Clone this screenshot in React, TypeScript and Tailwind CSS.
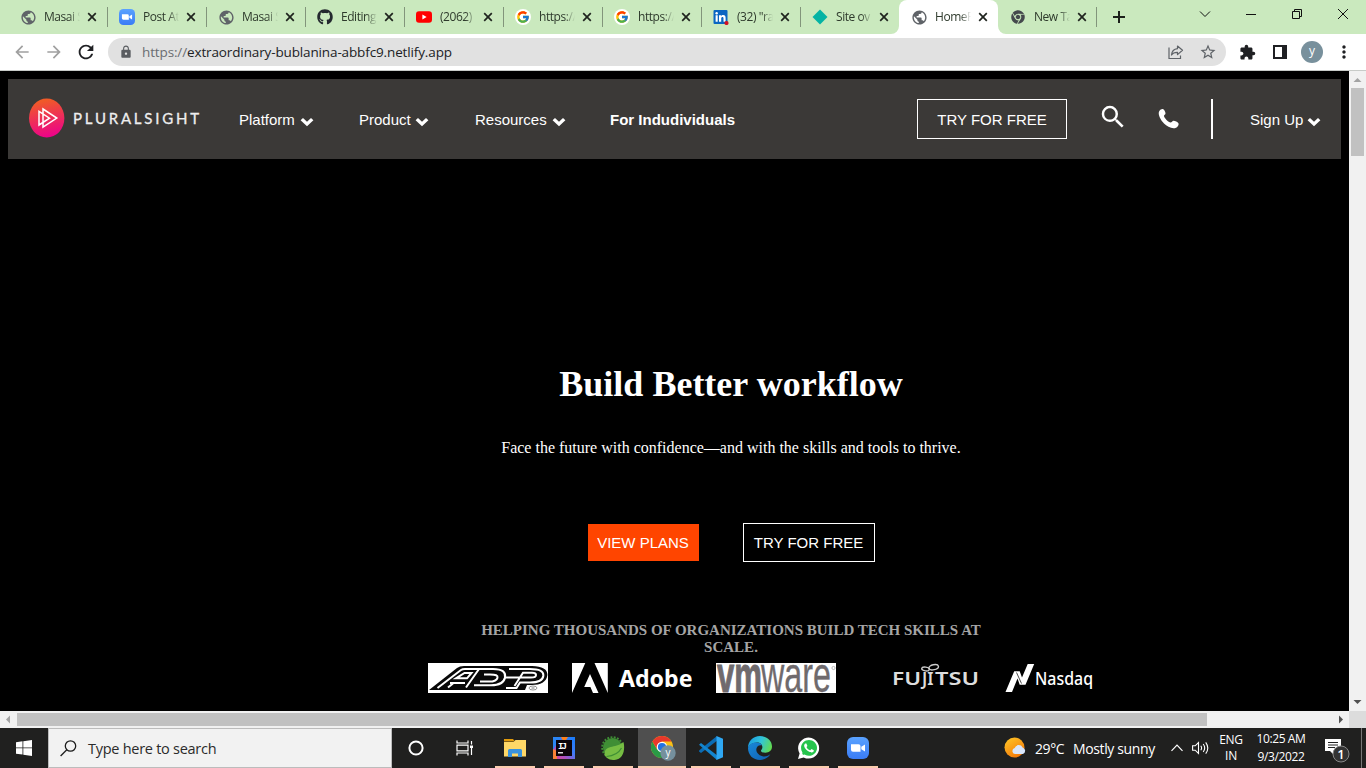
import React from "react";
import {
  MdPublic, MdLock, MdStarBorder, MdExtension, MdRefresh, MdArrowBack,
  MdArrowForward, MdMoreVert, MdSearch,
} from "react-icons/md";
import { FaGithub, FaWhatsapp, FaChrome } from "react-icons/fa";
import { FcGoogle } from "react-icons/fc";

const Zoom = ({ size }: { size: number }) => (
  <svg width={size} height={size} viewBox="0 0 22 22">
    <defs>
      <linearGradient id="zoomBlue" x1="0" y1="0" x2="0" y2="1">
        <stop offset="0" stopColor="#5aa2ff" />
        <stop offset="1" stopColor="#3a7cf5" />
      </linearGradient>
    </defs>
    <rect width="22" height="22" rx="6" fill="url(#zoomBlue)" />
    <path d="M4 7.2h7.5a2 2 0 0 1 2 2v5.6H6a2 2 0 0 1-2-2zM14.3 9.8l3.7-2.4v7.2l-3.7-2.4z" fill="#fff" />
  </svg>
);

const Globe = () => <MdPublic size={17} className="shrink-0 text-[#5f6368]" />;

const GoogleIcon = () => (
  <div className="flex size-4 items-center justify-center rounded-full bg-white">
    <FcGoogle size={14} />
  </div>
);

const Youtube = () => (
  <svg width="16" height="16" viewBox="0 0 16 16">
    <rect y="2.3" width="16" height="11.4" rx="3" fill="#f00" />
    <path d="M6.4 5.6v4.8L10.6 8z" fill="#fff" />
  </svg>
);

const LinkedIn = () => (
  <svg width="16" height="16" viewBox="0 0 16 16">
    <rect x="0.5" y="1" width="14" height="14" rx="1" fill="#0a66c2" />
    <path d="M2.6 6.3h2.1v6.5H2.6zM6 6.3h2v.9c.5-.8 1.2-1.1 2.1-1.1 1.9 0 2.5 1.2 2.5 3v3.7h-2.1V9.4c0-.9-.2-1.5-1-1.5s-1.3.6-1.3 1.5v3.4H6z" fill="#fff" />
    <circle cx="3.65" cy="4.2" r="1.2" fill="#fff" />
    <circle cx="13.5" cy="14" r="2.1" fill="#d11124" />
  </svg>
);

const Diamond = () => (
  <svg width="16" height="16" viewBox="0 0 16 16">
    <path d="M8 .5 15.5 8 8 15.5.5 8z" fill="#05b3a4" />
  </svg>
);

type TabInfo = { title: string; icon: React.ReactNode; active?: boolean; sep?: boolean; last?: boolean };

const tabs: TabInfo[] = [
  { title: "Masai S", icon: <Globe />, sep: true },
  { title: "Post At", icon: <Zoom size={16} />, sep: true },
  { title: "Masai S", icon: <Globe />, sep: true },
  { title: "Editing", icon: <FaGithub size={16} className="text-[#24292f]" />, sep: true },
  { title: "(2062) ", icon: <Youtube />, sep: true },
  { title: "https://", icon: <GoogleIcon />, sep: true },
  { title: "https://", icon: <GoogleIcon />, sep: true },
  { title: "(32) \"ra", icon: <LinkedIn />, sep: true },
  { title: "Site ov", icon: <Diamond /> },
  { title: "HomeP", icon: <Globe />, active: true },
  { title: "New Ta", icon: <FaChrome size={14} className="text-[#45494d]" />, sep: true, last: true },
];

const Tab = ({ title, icon, active, sep, last }: TabInfo) => (
  <div className={`relative flex h-[34px] w-[99px] shrink-0 items-center pl-3 ${active ? "z-10 rounded-t-lg bg-white" : ""}`}>
    {active && (
      <>
        <svg className="absolute -left-2 bottom-0" width="8" height="8"><path d="M8 0v8H0a8 8 0 0 0 8-8z" fill="#fff" /></svg>
        <svg className="absolute -right-2 bottom-0" width="8" height="8"><path d="M0 0v8h8a8 8 0 0 1-8-8z" fill="#fff" /></svg>
      </>
    )}
    <div className="flex w-4 shrink-0 items-center justify-center">{icon}</div>
    <div className="ml-2 w-[36px] overflow-hidden whitespace-pre text-[12px] tracking-[-0.45px] text-[#2e3a2c] [mask-image:linear-gradient(to_right,black_70%,transparent)]">
      {title}
    </div>
    <svg className="ml-[7px] shrink-0" width="10" height="10" viewBox="0 0 10 10"><path d="M1.2 1.2l7.6 7.6M8.8 1.2 1.2 8.8" stroke="#1f241e" strokeWidth="1.7" /></svg>
    {sep && <div className={`ml-auto h-5 w-px bg-[#82957b] ${last ? "" : "-mr-px"}`} />}
  </div>
);

const TabStrip = () => (
  <div className="flex h-[34px] bg-[#cae9be] pl-2">
    {tabs.map((t, i) => <Tab key={i} {...t} />)}
    <div className="flex w-[44px] items-center justify-center">
      <svg width="12" height="12"><path d="M6 0v12M0 6h12" stroke="#1c211b" strokeWidth="2" /></svg>
    </div>
    <svg className="ml-[41px]" width="184" height="28" viewBox="0 0 184 28" fill="none" stroke="#111">
      <path d="M18 11.5l5 5 5-5" />
      <path d="M64 14.5h10" />
      <path d="M110.5 11.5h7v7h-7zM112.5 11.5v-2h7v7h-2" />
      <path d="M156 9l10 10M166 9l-10 10" />
    </svg>
  </div>
);

const Toolbar = () => (
  <div className="flex h-9 items-center bg-white">
    <MdArrowBack size={20} className="ml-3 text-[#a0a0a0]" />
    <MdArrowForward size={20} className="ml-3 text-[#a0a0a0]" />
    <MdRefresh size={22} className="ml-[11px] text-[#1f2023]" />
    <div className="ml-[11px] flex h-7 w-[1118px] items-center rounded-full bg-[#e1e1e1] pl-[11px] pr-[9px]">
      <MdLock size={14} className="text-[#5a5d61]" />
      <div className="ml-[9px] whitespace-nowrap text-[13.5px] tracking-[-0.13px] text-[#202124]">
        <span className="text-[#6a6d71]">https://</span>extraordinary-bublanina-abbfc9.netlify.app
      </div>
      <svg className="ml-auto" width="16" height="16" viewBox="0 0 16 16" fill="none" stroke="#5f6368" strokeWidth="1.2">
        <path d="M1 3.5V14.5H12.5V11.5" />
        <path d="M9.5 2l5 4.3-5 4.3V8.3C6.5 8.2 4.6 9.2 3.5 11c.3-3.3 2.5-5.9 6-6.3z" strokeLinejoin="round" />
      </svg>
      <MdStarBorder size={18} className="ml-[15px] text-[#5f6368]" />
    </div>
    <MdExtension size={17} className="ml-[13px] text-[#1f2023]" />
    <svg className="ml-[17px]" width="14" height="14" viewBox="0 0 14 14">
      <path d="M0 0h14v14H0zM2 2v10h7V2z" fill="#1f2023" fillRule="evenodd" />
    </svg>
    <div className="ml-[14px] flex size-[22px] items-center justify-center rounded-full bg-[#78909c] pb-0.5 text-[12px] text-white">y</div>
    <MdMoreVert size={20} className="ml-[11px] text-[#1f2023]" />
  </div>
);

const Chevron = ({ className }: { className?: string }) => (
  <svg className={className} width="14" height="10" viewBox="0 0 14 10">
    <path d="M.6 3.2 3 .9l4 3.800L11 .9l2.400 2.300L7 9.300z" fill="#fff" />
  </svg>
);

const PluralsightLogo = () => (
  <svg className="-mt-0.5" width="172" height="42" viewBox="0 0 172 42">
    <defs>
      <linearGradient id="psGrad" x1="0.4" y1="0" x2="0.6" y2="1">
        <stop offset="0.05" stopColor="#f05a28" />
        <stop offset="1" stopColor="#ec008c" />
      </linearGradient>
    </defs>
    <ellipse cx="17.7" cy="21.1" rx="17.7" ry="19.5" fill="url(#psGrad)" />
    <path d="M14 12l13.8 9L14 30.2zM10 14.3l10.5 6.9L10 28z" fill="none" stroke="#fff" strokeWidth="1.5" />
    <text x="44" y="26.6" textLength="126" fontFamily="Lato, sans-serif" fontSize="15" fontWeight="400" fill="#eee" stroke="#eee" strokeWidth=".3">PLURALSIGHT</text>
  </svg>
);

const Nav = () => (
  <nav className="mx-2 mt-2 flex h-20 w-[1333px] items-center bg-[#3b3937] pl-[21px] font-['Liberation_Sans',Arial,sans-serif] text-[15px] text-white">
    <PluralsightLogo />
    <div className="ml-[38px] flex w-[120px] items-center pt-0.5">Platform<Chevron className="ml-[5px] mt-1" /></div>
    <div className="flex w-[116px] items-center pt-0.5">Product<Chevron className="ml-[4px] mt-1" /></div>
    <div className="flex w-[135px] items-center pt-0.5">Resources<Chevron className="ml-[5px] mt-1" /></div>
    <div className="w-[307px] pt-0.5 font-bold">For Indudividuals</div>
    <button className="h-10 w-[150px] border border-white pt-0.5">TRY FOR FREE</button>
    <MdSearch size={30} className="-mt-1 ml-[31px]" />
    <svg className="ml-[30px]" width="22" height="22" viewBox="0 0 22 22">
      <path d="M1.2 3.2C2.3 1.600 4 .6 5.300 1.200c1.300.8 2.100 2.800 2.200 4.300.1 1-1.500 1.600-1.500 2.500 0 1.800 4.600 6.400 6.600 6.600 1 .1 1.800-1.900 3-1.800 1.500.2 4 1.200 4.800 2.500.8 1.500-.8 3.600-2.400 4.400-3.500 1.600-8.800-.9-12-4.200C2.700 12.200-.5 6.500 1.200 3.200z" fill="#fff" />
    </svg>
    <div className="ml-[31px] h-10 w-0.5 bg-white" />
    <div className="ml-[37px] flex items-center pt-0.5">Sign Up<Chevron className="ml-[4px] mt-1" /></div>
  </nav>
);

const Adp = () => (
  <svg width="120" height="30" viewBox="0 0 120 30">
    <rect width="120" height="30" fill="#fff" />
    <path d="M1 27 29 5Q31.500 3 36 3h68c11 0 16 4 15.300 9.500-.8 6.500-7 9.500-15.300 9.500h-5l-2 5z" fill="#080808" />
    <g fill="none" stroke="#fff" strokeWidth="2">
      <path d="M9.500 25 33 7q1.500-1 4-1h14L38 24.500" />
      <path d="M22 20h15M28 15.300h11l4.500-5.300h-7z" />
      <path d="M20 24.500l5-4" />
      <path d="M51 6h14c10 0 13 3.500 12 8.500S71 22.300 63 22.300H46" />
      <path d="M56 11.500h6c6 0 8 1 7.500 3.200S67 18.600 61 18.600h-9" />
      <path d="M81 6h21c9 0 14 2 13.300 7-.7 5-5 6.500-13.300 6.500H92L88.500 25H78" />
      <path d="M76 14.500h27c3.500 0 5-1 5-2.500s-1-2.300-4-2.300h-9L86.500 23" />
    </g>
    <ellipse cx="105" cy="25" rx="4" ry="2" fill="#fff" stroke="#777" strokeWidth=".8" />
    <path d="M103.500 25h3" stroke="#777" />
  </svg>
);

const Adobe = () => (
  <svg width="120" height="30" viewBox="0 0 120 30">
    <path d="M0 0h13.300L0 30zM22.500 0h13.300v30zM18 11l8.500 19H21l-2.600-6h-6.200z" fill="#fff" />
    <text x="47" y="23.500" textLength="73.500" lengthAdjust="spacingAndGlyphs" fontFamily="'Noto Sans', sans-serif" fontSize="23.500" fontWeight="700" fill="#fff">Adobe</text>
  </svg>
);

const Vmware = () => (
  <svg width="120" height="30" viewBox="0 0 120 30">
    <rect width="120" height="30" fill="#fff" />
    <g transform="translate(0 28.500) scale(1 1.650)" fill="#6f6a6d" stroke="#6f6a6d" fontFamily="'Liberation Sans', sans-serif">
      <text x="1" y="0" textLength="45" lengthAdjust="spacingAndGlyphs" fontSize="30" fontWeight="700" strokeWidth=".6">vm</text>
      <text x="45" y="0" textLength="70" lengthAdjust="spacingAndGlyphs" fontSize="30" fontWeight="400" strokeWidth=".2">ware</text>
    </g>
    <circle cx="117.500" cy="5" r="1.600" fill="none" stroke="#999" strokeWidth=".7" />
  </svg>
);

const Fujitsu = () => (
  <svg width="120" height="30" viewBox="0 0 120 30">
    <g fill="#ddd" fontFamily="'Noto Sans', sans-serif" fontWeight="600">
      <text x="32" y="22" textLength="29" lengthAdjust="spacingAndGlyphs" fontSize="17">FU</text>
      <text x="75" y="22" textLength="44" lengthAdjust="spacingAndGlyphs" fontSize="17">TSU</text>
      <text x="62" y="22" textLength="11.500" lengthAdjust="spacingAndGlyphs" fontSize="17">JI</text>
    </g>
    <ellipse cx="65.500" cy="6" rx="3.800" ry="1.900" transform="rotate(8 65.500 6)" fill="none" stroke="#ccc" strokeWidth="1.400" />
    <ellipse cx="73.700" cy="4.200" rx="4.800" ry="2.500" transform="rotate(-12 73.700 4.200)" fill="none" stroke="#ccc" strokeWidth="1.400" />
  </svg>
);

const Nasdaq = () => (
  <svg width="93" height="30" viewBox="0 0 93 30">
    <path d="M1.500 29 10.200 8.300h5.500L18 14.500 23.700 1h6.500l-8.700 20.700h-5.800L13.500 15.500 8 29z" fill="#fff" />
    <path d="M12.500 9.500l5 11" stroke="#000" strokeWidth=".7" />
    <text x="31" y="22" textLength="58" lengthAdjust="spacingAndGlyphs" fontFamily="'Noto Sans', sans-serif" fontSize="18.500" fontWeight="500" fill="#fff">Nasdaq</text>
  </svg>
);

const Page = () => (
  <div className="h-[640px] w-[1349px] overflow-hidden bg-black">
    <div className="flow-root">
      <Nav />
      <main className="ml-2 flex w-[1446px] flex-col items-center font-['Liberation_Serif','Times_New_Roman',serif] text-white">
        <h1 className="mt-[203px] h-11 whitespace-nowrap text-[36px] font-bold leading-[44px]">Build Better workflow</h1>
        <p className="mt-[32px] h-5 whitespace-nowrap text-base leading-5">Face the future with confidence—and with the skills and tools to thrive.</p>
        <div className="mt-[65px] flex items-center gap-11 font-['Liberation_Sans',Arial,sans-serif] text-[15px]">
          <button className="h-[37px] w-[111px] whitespace-nowrap bg-[#ff4500] pt-0.5">VIEW PLANS</button>
          <button className="h-[39px] w-[132px] whitespace-nowrap border border-white pt-0.5">TRY FOR FREE</button>
        </div>
        <p className="mt-[60px] w-[530px] text-center text-[15px] font-bold leading-[17px] text-[#a5a5a5]">
          HELPING THOUSANDS OF ORGANIZATIONS BUILD TECH SKILLS AT SCALE.
        </p>
        <div className="ml-[420px] mt-[7px] flex gap-6 self-start">
          <Adp /><Adobe /><Vmware /><Fujitsu /><Nasdaq />
        </div>
      </main>
    </div>
  </div>
);

const VScroll = () => (
  <div className="flex h-[640px] w-[17px] flex-col items-center bg-[#f1f1f1]">
    <svg width="17" height="17"><path d="M4.500 11 8.500 7l4 4z" fill="#a3a3a3" /></svg>
    <div className="h-[68px] w-[13px] bg-[#c1c1c1]" />
    <svg className="mt-auto" width="17" height="17"><path d="M4.500 6 8.500 10l4-4z" fill="#505050" /></svg>
  </div>
);

const HScroll = () => (
  <div className="flex h-[17px] items-center bg-[#f1f1f1]">
    <svg width="17" height="17"><path d="M10 4.500 6 8.500l4 4z" fill="#a3a3a3" /></svg>
    <div className="h-[13px] w-[1190px] bg-[#c1c1c1]" />
    <svg className="ml-auto" width="17" height="17"><path d="M7 4.500 11 8.500l-4 4z" fill="#505050" /></svg>
    <div className="h-[17px] w-[17px] bg-[#dcdcdc]" />
  </div>
);

const Folder = () => (
  <svg width="22" height="20" viewBox="0 0 22 20">
    <path d="M0 1h9l2 2.500H0z" fill="#e29b0c" />
    <path d="M0 4h9.500l2-2H22v16.500H0z" fill="#ffd867" />
    <path d="M4 19v-6.500A1.500 1.500 0 0 1 5.500 11h11a1.500 1.500 0 0 1 1.500 1.500V19h-4v-3.500H8V19z" fill="#3a93dd" />
  </svg>
);

const Intellij = () => (
  <svg width="22" height="22" viewBox="0 0 22 22">
    <defs>
      <linearGradient id="ij" x1="0" y1="1" x2="1" y2="0">
        <stop offset="0" stopColor="#e8468a" /><stop offset=".3" stopColor="#b04fc0" />
        <stop offset=".6" stopColor="#3f7cf6" /><stop offset="1" stopColor="#167dfc" />
      </linearGradient>
    </defs>
    <rect width="22" height="22" fill="url(#ij)" />
    <path d="M0 0h8L0 13z" fill="#2b86f5" />
    <path d="M8 0h7L11 6z" fill="#fc801d" />
    <path d="M0 12l4 2v8H0z" fill="#f98236" />
    <rect x="3" y="3" width="16" height="16" fill="#0b0309" />
    <text x="5" y="11.500" fontFamily="'Liberation Mono', monospace" fontSize="9" fontWeight="700" fill="#fff" textLength="9">IJ</text>
    <rect x="5" y="15" width="5" height="1.500" fill="#ddd" />
  </svg>
);

const Spring = () => (
  <svg width="24" height="24" viewBox="0 0 24 24">
    <circle cx="11.500" cy="11.500" r="9.500" fill="#3f8e35" />
    <circle cx="11.500" cy="11.500" r="10.300" fill="none" stroke="#3f8e35" strokeWidth="2" strokeDasharray="1.900 1.400" />
    <path d="M22.500 6c2 8-.5 17.500-9 18-5 .3-10-2.500-10-6.500C4 8.500 17 12 22.500 6z" fill="#76bd43" />
    <path d="M5.500 20.500C12 20 17.500 17.500 20.500 12" fill="none" stroke="#3f8e35" strokeWidth="1.200" />
  </svg>
);

const ChromeIcon = () => (
  <svg width="25" height="25" viewBox="0 0 25 25">
    <circle cx="11" cy="11" r="11" fill="#fbc116" />
    <path d="M1.470 5.500A11 11 0 0 0 11 22l4.800-8.200L11 11 6.200 13.800z" fill="#2a9a46" />
    <path d="M1.470 5.500 6.300 13.600 11 5.500l9.530 0A11 11 0 0 0 1.470 5.500z" fill="#e8382c" />
    <circle cx="11" cy="11" r="5.300" fill="#fff" /><circle cx="11" cy="11" r="4.100" fill="#2272e3" />
    <circle cx="17" cy="17" r="7.700" fill="#75909d" />
    <text x="17" y="20" textAnchor="middle" fontFamily="'Open Sans', sans-serif" fontSize="10" fill="#fff">y</text>
  </svg>
);

const VsCode = () => (
  <svg width="24" height="24" viewBox="0 0 24 24">
    <path d="M0 15.400 2 17 18 4.800V0L.3 14.300z" fill="#0b6cb4" />
    <path d="M2 7l16 12.200V24L0 8.800z" fill="#1385cf" />
    <path d="M17.500 0 24 2.800v18.400L17.500 24z" fill="#2fa8f3" />
  </svg>
);

const Edge = () => (
  <svg width="24" height="24" viewBox="0 0 24 24">
    <defs>
      <linearGradient id="edgeTop" x1="0" y1=".3" x2="1" y2=".6"><stop offset="0" stopColor="#1b9de2" /><stop offset=".5" stopColor="#31c4da" /><stop offset="1" stopColor="#62db50" /></linearGradient>
      <linearGradient id="edgeLow" x1="0" y1="0" x2="1" y2="1"><stop offset="0" stopColor="#1988d9" /><stop offset="1" stopColor="#0f5fb0" /></linearGradient>
    </defs>
    <path d="M0 12C0 5 5 0 12 0s12 4.500 12 10.500c0 4-3 6.200-6.500 6.200-2.500 0-4.500-.8-4.500-2 0-.8 1.400-1.400 1.400-3.400C14.400 8.500 12 6.500 9 6.500 4 6.500 1 9.500 0 12z" fill="url(#edgeTop)" />
    <path d="M0 12C1 8.500 4.500 6.500 8.500 6.500c3 0 4.700 1.300 5.400 2.800C10.500 8.500 8.300 11 8.300 13.500c0 4 4 7 8.200 7 2.500 0 4.500-1.200 5.800-2.200C20.500 21.500 16.500 24 12 24 5 24 0 19 0 12z" fill="url(#edgeLow)" />
  </svg>
);

const WhatsApp = () => (
  <div className="grid size-6 place-items-center">
    <svg className="col-start-1 row-start-1" width="24" height="24" viewBox="0 0 24 24">
      <path d="M1 23 2.600 17.500A10.500 10.500 0 1 1 6.700 21.400z" fill="#fff" />
      <circle cx="12" cy="12" r="9" fill="#26c44c" />
    </svg>
    <FaWhatsapp size={22} className="col-start-1 row-start-1 text-white" />
  </div>
);

const apps: { node: React.ReactNode; active?: boolean }[] = [
  { node: <Folder /> }, { node: <Intellij /> }, { node: <Spring /> }, { node: <ChromeIcon />, active: true },
  { node: <VsCode /> }, { node: <Edge /> }, { node: <WhatsApp /> }, { node: <Zoom size={22} /> },
];

const Taskbar = () => (
  <div className="flex h-10 items-center bg-[#20201f] text-white">
    <div className="flex w-12 justify-center">
      <svg width="16" height="16" viewBox="0 0 16 16" fill="#fff"><path d="M0 2.200 6.500 1.300v6.200H0zM7.300 1.200 16 0v7.500H7.300zM0 8.300h6.500v6.300L0 13.700zM7.300 8.300H16V16l-8.700-1.200z" /></svg>
    </div>
    <div className="flex h-10 w-[344px] items-center border border-[#bcbcbc] bg-[#f2f2f2] pl-[11px] text-[#2b2b2b]">
      <svg width="17" height="17" viewBox="0 0 17 17" fill="none" stroke="#1c1c1c" strokeWidth="1.300"><circle cx="10.500" cy="6" r="5.200" /><path d="M6.800 9.800.6 16" /></svg>
      <div className="ml-[11px] whitespace-nowrap pt-px text-[14.5px] tracking-[-0.27px]">Type here to search</div>
    </div>
    <div className="flex w-12 justify-center">
      <svg width="16" height="16"><circle cx="8" cy="8" r="6.600" fill="none" stroke="#fff" strokeWidth="2" /></svg>
    </div>
    <div className="flex w-12 justify-center">
      <svg width="17" height="16" viewBox="0 0 17 16" fill="none" stroke="#fff" strokeWidth="1.200"><path d="M1 .5V3h11V.5M1 15.500V13h11v2.500M1 5.200h11v5.600H1zM15.500 1v3.500M15.500 8v7" /><path d="M14 5.500h3V8h-3z" fill="#fff" stroke="none" /></svg>
    </div>
    <div className="ml-[3px] flex gap-px">
      {apps.map((a, i) => (
        <div key={i} className={`flex h-10 w-12 flex-col items-center ${a.active ? "bg-[#4f4f4f]" : ""}`}>
          <div className={`flex h-[38px] items-center pt-0.5 ${a.active ? "pl-0.5" : ""}`}>{a.node}</div>
          <div className={`h-0.5 bg-[#fbcdaf] ${a.active ? "w-12" : "w-10"}`} />
        </div>
      ))}
    </div>
    <svg className="ml-[122px]" width="23" height="22" viewBox="0 0 23 22">
      <defs><linearGradient id="sun" x1="0" y1="0" x2="0.600" y2="1"><stop offset="0" stopColor="#ffc928" /><stop offset="1" stopColor="#f47b0a" /></linearGradient></defs>
      <circle cx="10.500" cy="10.500" r="10" fill="url(#sun)" />
      <path d="M11 17a3 3 0 0 1-.3-5.900 4.300 4.300 0 0 1 7.900-.7A3.500 3.500 0 0 1 19 17z" fill="#d9e6fb" />
    </svg>
    <div className="ml-[8px] w-[38px] whitespace-nowrap text-[14px] tracking-[-0.4px]">29°C</div>
    <div className="w-[98px] whitespace-nowrap text-[14px] tracking-[-0.37px]">Mostly sunny</div>
    <svg width="12" height="8" fill="none" stroke="#fff" strokeWidth="1.200"><path d="M.5 6.800 6 1.200l5.500 5.600" /></svg>
    <svg className="ml-[9px]" width="18" height="14" viewBox="0 0 18 14" fill="none" stroke="#fff" strokeWidth="1.100"><path d="M.6 4.800h2.600L6.500 1.500v11L3.200 9.200H.6zM8.800 4.700q1.600 2.300 0 4.600M11.200 3q3 4 0 8M13.700 1.300q4.200 5.700 0 11.400" /></svg>
    <div className="ml-[3px] w-[36px] text-center text-[12px] leading-4 tracking-[-0.3px]">ENG<br />IN</div>
    <div className="ml-[2px] w-[60px] whitespace-nowrap text-center text-[12px] leading-[18px] tracking-[-0.4px]">10:25 AM<br />9/3/2022</div>
    <svg className="ml-[14px] mt-1" width="25" height="26" viewBox="0 0 25 26">
      <path d="M0 2h16v12H8.500v3.500L5 14H0z" fill="#fff" />
      <path d="M3 5.500h10M3 8h10M3 10.500h7" stroke="#222" />
      <circle cx="16" cy="17" r="8" fill="#333" stroke="#888" />
      <text x="16" y="21.500" textAnchor="middle" fontFamily="'Open Sans', sans-serif" fontSize="13" fontWeight="600" fill="#fff">1</text>
    </svg>
    <div className="ml-auto mr-1 h-10 w-px bg-[#777]" />
  </div>
);

export default function App() {
  return (
    <div className="h-[768px] w-[1366px] overflow-hidden bg-white font-['Open_Sans','Noto_Sans',sans-serif]">
      <TabStrip />
      <Toolbar />
      <div className="h-px bg-[#c8cbc8]" />
      <div className="flex"><Page /><VScroll /></div>
      <HScroll />
      <Taskbar />
    </div>
  );
}
